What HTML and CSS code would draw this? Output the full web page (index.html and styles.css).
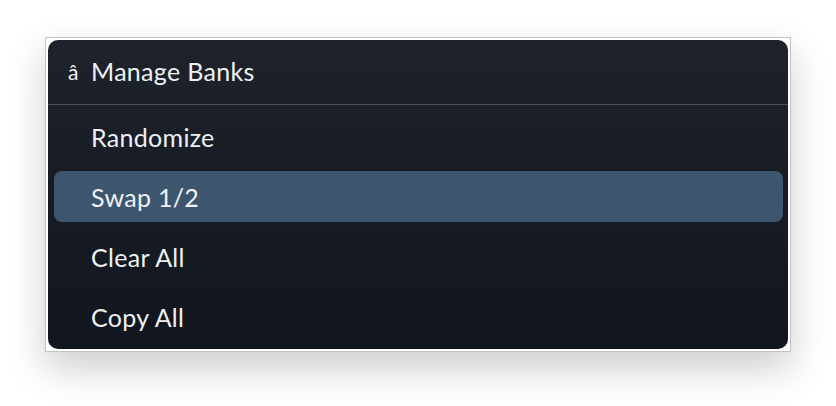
FILE: index.html
```html
<!DOCTYPE html>
<html>
<head>
<meta charset="utf-8">
<link rel="stylesheet" href="styles.css">
</head>
<body>
<div class="frame">
  <div class="menu">
    <div class="menu-header">
      <span class="menu-icon">â</span>
      <span class="menu-title">Manage Banks</span>
    </div>
    <div class="menu-list">
      <div class="menu-item">Randomize</div>
      <div class="menu-item active">Swap 1/2</div>
      <div class="menu-item">Clear All</div>
      <div class="menu-item">Copy All</div>
    </div>
  </div>
</div>
</body>
</html>
```

FILE: styles.css
```css
html, body {
  margin: 0;
  padding: 0;
  background: #ffffff;
}
body {
  min-height: 406px;
  box-sizing: border-box;
  padding: 37px 0 0 45px;
  font-family: Lato, "Noto Sans", sans-serif;
}
.frame {
  width: 740px;
  padding: 2px;
  border: 1px solid #c2c2c2;
  background: #ffffff;
  box-shadow: 0 16px 36px rgba(0, 0, 0, 0.2);
}
.menu {
  height: 309px;
  border-radius: 10px;
  background: linear-gradient(180deg, #1e232b 0%, #11151d 100%);
  display: flex;
  flex-direction: column;
  color: #eef1f4;
}
.menu-header {
  height: 65px;
  box-sizing: border-box;
  border-bottom: 1px solid #4b5059;
  display: flex;
  align-items: center;
  padding-left: 20px;
  padding-bottom: 2px;
}
.menu-icon {
  font-size: 21px;
  width: 23px;
}
.menu-title {
  font-size: 25px;
  letter-spacing: 0.3px;
}
.menu-list {
  padding: 6px;
  padding-right: 5px;
  display: flex;
  flex-direction: column;
  gap: 9px;
}
.menu-item {
  height: 51px;
  display: flex;
  align-items: center;
  padding-left: 37px;
  font-size: 25px;
  letter-spacing: 0.3px;
  border-radius: 8px;
}
.menu-item.active {
  background: #3e566d;
}
```
